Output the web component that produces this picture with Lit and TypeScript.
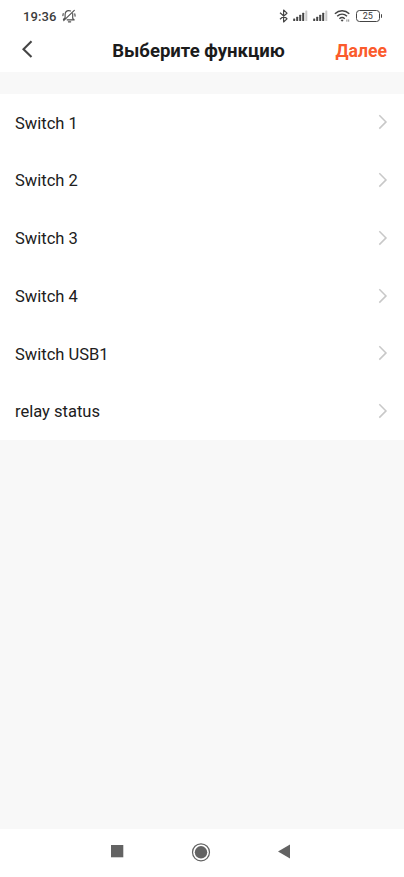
import { LitElement, html, css, svg } from "lit";
import { customElement, property } from "lit/decorators.js";

@customElement("status-bar")
class StatusBar extends LitElement {
  static styles = css`
    :host { display: flex; height: 32px; box-sizing: border-box; padding: 0 22px 0 23px; align-items: center; justify-content: space-between; color: #3c3c3c; }
    .side { display: flex; align-items: center; height: 32px; }
    .time { font-size: 13px; font-weight: 500; letter-spacing: 0.1px; width: 39px; line-height: 33px; white-space: nowrap; }
    svg { display: block; flex: none; }
    .bt { margin-right: 4px; }
    .signal { margin-right: 5px; }
    .wifi { margin: 0 5px 0 1px; }
    .battery { display: flex; align-items: center; }
    .cell { box-sizing: border-box; width: 23.5px; height: 12px; border: 1.5px solid #444; border-radius: 3.5px; font-size: 9px; line-height: 10.5px; text-align: center; font-weight: 400; }
    .nub { width: 1.5px; height: 4px; margin-left: 1px; background: #444; border-radius: 0 1px 1px 0; }
  `;
  signal() {
    return html`<svg class="signal" width="15" height="12" viewBox="0 0 15 12">
      ${[2.5, 4.2, 6.2, 8.2].map((h, i) => svg`<rect x=${i * 3 + 0.2} y=${11 - h} width="2" height=${h} rx=".5" fill="#454545"/>`)}
      <rect x="12.3" y=".6" width="2" height="10.4" rx=".5" fill="#c9c9c9"/>
    </svg>`;
  }
  render() {
    return html`
      <div class="side">
        <span class="time">19:36</span>
        <svg width="15" height="14" viewBox="0 0 15 14" fill="none" stroke="#505050" stroke-width="1.15" stroke-linecap="round" stroke-linejoin="round">
          <path d="M3.1 8.6V5.7C3.1 3.4 4.7 1.6 6.8 1.6c.7 0 1.3.1 1.8.4M10.7 4.6v4.7l1.5 1.5H5.1M6.4 12.8h2.3M1.7 11.6L12.3 1.3M1.2 4.6L.9 6.6M12.8 4.9l.3 2.2M3.1 8.6L1.4 10.4"/>
        </svg>
      </div>
      <div class="side">
        <svg class="bt" width="10" height="14" viewBox="0 0 10 14" fill="none" stroke="#444" stroke-width="1.15" stroke-linejoin="round">
          <path d="M1 3.8L8 9.8 4.6 13V1L8 4.2 1 10.2"/>
        </svg>
        ${this.signal()}${this.signal()}
        <svg class="wifi" width="17" height="14" viewBox="0 0 17 14" fill="none" stroke="#444" stroke-width="1.45">
          <path d="M.9 4.8c4.2-4 10.2-4 14.4 0M3.2 7.3c2.9-2.7 6.9-2.7 9.8 0M5.4 9.7c1.7-1.4 3.7-1.4 5.4 0"/>
          <path d="M6.6 11.1q1.5-1.1 3 0L8.1 12.8z" fill="#444" stroke="none"/>
          <path d="M12.9 10.4v2.3M14.7 10.4v2.3" stroke="#888" stroke-width="1"/>
        </svg>
        <div class="battery"><div class="cell">25</div><div class="nub"></div></div>
      </div>`;
  }
}

@customElement("function-row")
class FunctionRow extends LitElement {
  @property() label = "";
  static styles = css`
    :host { display: flex; height: 57.75px; box-sizing: border-box; padding: 0 16px 0 15px; align-items: center; justify-content: space-between; background: #fff; color: #202020; font-size: 16.55px; }
    .label { line-height: 20px; padding-top: 2.5px; }
    svg { display: block; }
  `;
  render() {
    return html`<span class="label">${this.label}</span>
      <svg width="10" height="16" viewBox="0 0 10 16" fill="none" stroke="#c8c8c8" stroke-width="1.5"><path d="M1.3 1.2L8 7.9 1.3 14.6"/></svg>`;
  }
}

@customElement("app-root")
class AppRoot extends LitElement {
  static styles = css`
    :host { display: flex; flex-direction: column; height: 877px; background: #fff; font-family: Roboto, "Noto Sans", sans-serif; overflow: hidden; }
    .header { display: grid; grid-template-columns: 91px 1fr 98px; height: 40px; align-items: center; flex: none; }
    .back { padding-left: 20px; padding-bottom: 6px; }
    .back svg { display: block; }
    .title { font-size: 18.55px; font-weight: 700; color: #1b1b1b; text-align: center; white-space: nowrap; line-height: 22px; padding-bottom: 3px; }
    .next { font-size: 17.6px; font-weight: 700; color: #fb5b2c; text-align: right; padding-right: 17px; line-height: 22px; padding-bottom: 3px; }
    .body { flex: 1; background: #f8f8f8; padding-top: 21.5px; }
    .nav { height: 48px; flex: none; display: flex; justify-content: center; }
    .nav svg { display: block; }
  `;
  render() {
    return html`
      <status-bar></status-bar>
      <div class="header">
        <div class="back"><svg width="14" height="18" viewBox="0 0 14 18" fill="none" stroke="#454545" stroke-width="2.1"><path d="M11.5 1.3L3.5 9.2l8 7.9"/></svg></div>
        <div class="title">Выберите функцию</div>
        <div class="next">Далее</div>
      </div>
      <div class="body">
        ${["Switch 1", "Switch 2", "Switch 3", "Switch 4", "Switch USB1", "relay status"].map((l) => html`<function-row .label=${l}></function-row>`)}
      </div>
      <div class="nav">
        <svg width="404" height="48" viewBox="0 0 404 48" fill="#636363">
          <rect x="111" y="16" width="12.3" height="12.3"/>
          <circle cx="201" cy="23.3" r="8.5" fill="none" stroke="#636363" stroke-width="1.2"/>
          <circle cx="201" cy="23.3" r="6.2"/>
          <path d="M278 22.4L290 15.4V29.4z"/>
        </svg>
      </div>`;
  }
}
